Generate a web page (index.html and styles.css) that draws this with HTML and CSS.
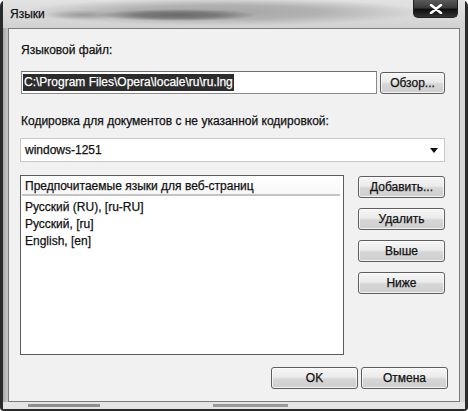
FILE: index.html
```html
<!DOCTYPE html>
<html lang="ru">
<head>
<meta charset="utf-8">
<title>Языки</title>
<link rel="stylesheet" href="styles.css">
</head>
<body>
<div class="window">
  <div class="titlebar">
    <span class="title">Языки</span>
    <div class="close">
      <svg width="14" height="10" viewBox="0 0 14 10"><path d="M2 1 L12 9 M12 1 L2 9" stroke="#fff" stroke-width="2.6" stroke-linecap="round"/></svg>
    </div>
  </div>
  <div class="panel">
    <div class="label first">Языковой файл:</div>
    <div class="file-row">
      <div class="input"><span class="selected">C:\Program Files\Opera\locale\ru\ru.lng</span></div>
      <button class="btn browse">Обзор...</button>
    </div>
    <div class="label second">Кодировка для документов с не указанной кодировкой:</div>
    <div class="select">
      <span>windows-1251</span>
      <svg width="8" height="5" viewBox="0 0 8 5"><path d="M0 0 H8 L4 5 Z" fill="#111"/></svg>
    </div>
    <div class="lang-area">
      <div class="listbox">
        <div class="list-header">Предпочитаемые языки для веб-страниц</div>
        <div class="item">Русский (RU), [ru-RU]</div>
        <div class="item">Русский, [ru]</div>
        <div class="item">English, [en]</div>
      </div>
      <div class="side-buttons">
        <button class="btn">Добавить...</button>
        <button class="btn">Удалить</button>
        <button class="btn">Выше</button>
        <button class="btn">Ниже</button>
      </div>
    </div>
    <div class="footer">
      <button class="btn ok">OK</button>
      <button class="btn">Отмена</button>
    </div>
  </div>
  <div class="bottom-frame"></div>
</div>
</body>
</html>
```

FILE: styles.css
```css
* { box-sizing: border-box; }
html, body {
  margin: 0;
  padding: 0;
  background: #ffffff;
}
body {
  width: 468px;
  height: 411px;
  overflow: hidden;
  font-family: "Liberation Sans", Arial, sans-serif;
  font-size: 12px;
  color: #111;
  -webkit-text-stroke: 0.25px #111;
}
.window {
  width: 468px;
  height: 411px;
  display: flex;
  flex-direction: column;
  border-left: 3px solid #2a2a2a;
  border-right: 3px solid #2a2a2a;
  border-bottom: 2px solid #2a2a2a;
  border-radius: 6px 6px 4px 4px;
  background: linear-gradient(90deg, #a8a8a8 0, #c4c4c4 4px, #d6d6d6 100%);
}
.titlebar {
  height: 28px;
  display: flex;
  justify-content: space-between;
  align-items: flex-start;
  padding-left: 7px;
  padding-right: 7px;
  background:
    radial-gradient(ellipse 80px 6px at 175px 15px, #6a6a6a 0, #7a7a7a 50%, rgba(120,120,120,0) 100%),
    radial-gradient(ellipse 40px 5px at 80px 15px, #9a9a9a 0, rgba(150,150,150,0) 100%),
    radial-gradient(ellipse 200px 14px at 220px 12px, #a6a6a6 0, #b2b2b2 50%, rgba(190,190,190,0) 100%),
    linear-gradient(180deg, #e2e2e2 0, #d2d2d2 100%);
}
.title {
  margin-top: 7px;
  font-size: 12px;
  color: #111;
}
.close {
  width: 45px;
  height: 18px;
  display: flex;
  align-items: center;
  justify-content: center;
  border: 1px solid #222;
  border-top: none;
  border-radius: 0 0 5px 5px;
  background: linear-gradient(180deg, #5a5a5a 0, #3a3a3a 45%, #0e0e0e 55%, #333 100%);
  -webkit-text-stroke: 0;
}
.panel {
  margin-left: 5px;
  margin-right: 5px;
  height: 374px;
  border: 1px solid #7c7c7c;
  background: #f1f1f1;
  padding: 13px 11px 12px 12px;
  display: flex;
  flex-direction: column;
}
.label {
  height: 16px;
  line-height: 16px;
  white-space: nowrap;
}
.first { margin-bottom: 13px; }
.second { margin-top: 19px; margin-bottom: 9px; }
.file-row {
  display: flex;
  gap: 3px;
  align-items: center;
  height: 23px;
}
.input {
  width: 356px;
  height: 23px;
  border: 1px solid #8a8a8a;
  border-top-color: #6e6e6e;
  background: #fff;
  padding: 2px 1px;
  display: flex;
  align-items: center;
}
.selected {
  background: #2c2c2c;
  color: #fff;
  -webkit-text-stroke: 0.25px #fff;
  line-height: 17px;
  height: 17px;
  padding: 0 1px;
  white-space: nowrap;
}
.btn {
  font-family: inherit;
  font-size: 12px;
  color: #111;
  width: 87px;
  height: 22px;
  padding: 0;
  border: 1px solid #5e5e5e;
  border-radius: 3px;
  background: linear-gradient(180deg, #f6f6f6 0, #ebebeb 45%, #d6d6d6 55%, #cfcfcf 100%);
  box-shadow: inset 0 0 0 1px rgba(255,255,255,0.7);
  -webkit-text-stroke: 0.25px #111;
}
.browse { width: 65px; }
.select {
  margin-left: -1px;
  width: 425px;
  height: 25px;
  border: 1px solid #c8c8c8;
  background: #fff;
  display: flex;
  align-items: center;
  justify-content: space-between;
  padding: 0 6px 0 4px;
}
.lang-area {
  margin-top: 13px;
  display: flex;
  gap: 14px;
  margin-left: -1px;
}
.listbox {
  width: 324px;
  height: 180px;
  border: 1px solid #5c5c5c;
  background: #fff;
  padding: 1px 1px;
}
.list-header {
  height: 19px;
  line-height: 18px;
  padding-left: 3px;
  border-bottom: 2px solid #c4c4c4;
  margin-right: 2px;
  background: linear-gradient(180deg, #ffffff 0, #f7f7f7 100%);
}
.item {
  height: 17px;
  line-height: 17px;
  padding-left: 3px;
  white-space: nowrap;
}
.list-header + .item { margin-top: 3px; }
.side-buttons {
  display: flex;
  flex-direction: column;
  gap: 10px;
  padding-top: 1px;
}
.footer {
  margin-top: 12px;
  display: flex;
  justify-content: flex-end;
  gap: 3px;
}
.bottom-frame {
  flex: 1;
  background:
    linear-gradient(90deg, rgba(0,0,0,0) 25px, #8e8e8e 25px, #8e8e8e 97px, rgba(0,0,0,0) 97px, rgba(0,0,0,0) 210px, #999 210px, #999 285px, rgba(0,0,0,0) 285px);
  background-size: 100% 3px;
  background-repeat: no-repeat;
  background-position: 0 2px;
  background-color: #e4e4e4;
}
```
